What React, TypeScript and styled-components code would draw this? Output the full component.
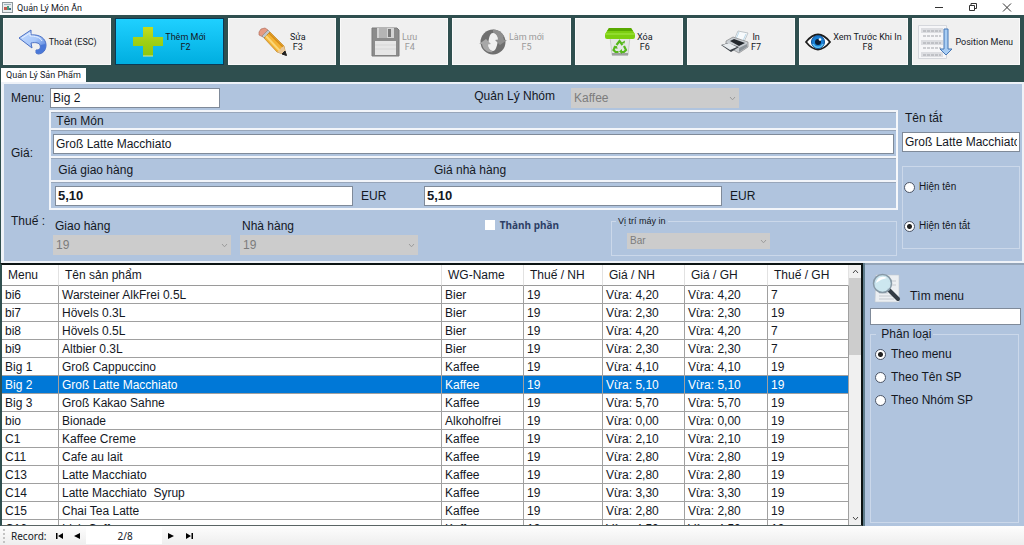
import React, { useState } from "react";
import styled, { createGlobalStyle, css } from "styled-components";

const GlobalStyle = createGlobalStyle`
  * { box-sizing: border-box; }
  body { margin: 0; background: #2f4f4f; color: #14181f; font: 12px/14px "Liberation Sans", Arial, sans-serif; }
  input, select, button { font: inherit; color: inherit; }
`;

const Window = styled.div`
  display: flex;
  flex-direction: column;
  height: 100vh;
  overflow: hidden;
`;

/* ---------- title bar ---------- */
const TitleBar = styled.header`
  display: flex;
  align-items: center;
  flex: none;
  height: 15px;
  padding: 0 12px 0 2px;
  background: #fff;
`;
const Title = styled.h1`
  flex: 1;
  margin: 0 0 0 4px;
  font: 9px/14px Roboto, sans-serif;
`;
const WindowButtons = styled.div`
  display: flex;
  gap: 24px;
`;
const WindowButton = styled.button`
  display: flex;
  padding: 0;
  border: 0;
  background: none;
`;

/* ---------- toolbar ---------- */
const Toolbar = styled.nav`
  display: flex;
  flex: none;
  gap: 4px;
  height: 53px;
  padding: 3px 4px 3px 3px;
  background: #2f4f4f;
`;
const ToolButton = styled.button<{ $active?: boolean; $wide?: boolean }>`
  display: flex;
  align-items: center;
  justify-content: center;
  gap: 2px;
  flex: ${(p) => (p.$wide ? 118 : 108)} 1 0;
  min-width: 0;
  padding: 0;
  border: 1px solid #fafafa;
  background: #f0f0f0;
  font: 9px/10px Roboto, sans-serif;
  white-space: pre;
  &:disabled { color: #9a9a9a; }
  ${(p) =>
    p.$active &&
    css`
      border-color: #0b3a55;
      background: linear-gradient(#1fd0ff, #00aee0);
    `}
`;

/* ---------- tabs and form ---------- */
const TabStrip = styled.div`
  display: flex;
  flex: none;
  height: 14px;
  padding-left: 1px;
  background: #2f4f4f;
`;
const Tab = styled.button`
  padding: 0 5px;
  border: 0;
  background: #fff;
  font: 9px/14px Roboto, sans-serif;
`;
const FormPanel = styled.section`
  display: flex;
  flex: none;
  gap: 4px;
  height: 181px;
  margin-left: 1px;
  border: 2px solid #eef2f8;
  border-left-width: 3px;
  background: #b0c4de;
`;
const FormMain = styled.div`
  flex: 1;
  min-width: 0;
`;
const FormRow = styled.div<{ $height: number }>`
  display: flex;
  height: ${(p) => p.$height}px;
`;
const RowLabel = styled.label<{ $top: number }>`
  flex: none;
  width: 45px;
  padding: ${(p) => p.$top}px 0 0 7px;
`;
const TextBox = styled.input<{ $bold?: boolean }>`
  width: 100%;
  height: 20px;
  padding: 0 2px;
  border: 1px solid #7f8a99;
  border-radius: 0;
  background: #fff;
  color: #14181f;
  outline: none;
  ${(p) => p.$bold && "font-weight: bold; font-size: 13px;"}
`;
const MenuRow = styled.div`
  display: grid;
  grid-template-columns: 170px 1fr 168px;
  flex: 1;
  align-items: start;
  padding: 4px 159px 0 1px;
`;
const GroupLabel = styled.label`
  padding: 1px 16px 0 0;
  text-align: right;
`;
const SelectBox = styled.span<{ $small?: boolean }>`
  position: relative;
  display: block;
  select {
    display: block;
    width: 100%;
    height: ${(p) => (p.$small ? 16 : 20)}px;
    padding: 0 3px;
    border: 0;
    border-radius: 0;
    appearance: none;
    background: #cccccc;
    color: #7c7c7c;
    opacity: 1;
    ${(p) => p.$small && "font-size: 10px;"}
  }
  svg {
    position: absolute;
    right: 3px;
    top: 50%;
    margin-top: -2px;
  }
`;
const PriceGroup = styled.div`
  display: grid;
  grid-template-rows: 18px 28px 24px 1fr;
  flex: 1;
  border: 2px solid #f2f5fa;
  border-right-color: #f6f8fb;
`;
const PriceLine = styled.div<{ $last?: boolean }>`
  display: flex;
  align-items: center;
  padding: 0 2px;
  border-top: 1px solid #98a6ba;
  border-bottom: ${(p) => (p.$last ? 0 : 2)}px solid #f2f5fa;
`;
const PriceHalf = styled.div`
  display: flex;
  align-items: center;
  gap: 8px;
  width: 369px;
  padding: 0 2px;
  input { width: 298px; }
`;
const TaxField = styled.label`
  display: flex;
  flex-direction: column;
  gap: 2px;
  width: 178px;
  margin: 9px 5px 0 4px;
  > span:first-child { padding-left: 2px; }
`;
const CheckLabel = styled.label`
  display: flex;
  align-items: center;
  align-self: flex-start;
  gap: 5px;
  margin: 8px 0 0 auto;
  color: #2d3f66;
  font: bold 10px/14px "Noto Sans", sans-serif;
  input {
    appearance: none;
    width: 10px;
    height: 10px;
    margin: 0;
    background: #fff;
    &:checked { background: #2d3f66; }
  }
`;
const FieldSet = styled.fieldset`
  min-width: 0;
  margin: 0;
  padding: 0;
  border: 1px solid #cbd8ea;
  legend { padding: 0 2px; }
`;
const PrinterSet = styled(FieldSet)`
  width: 286px;
  height: 42px;
  margin: 4px 1px 0 52px;
  padding: 5px 126px 0 15px;
  legend { margin-left: -11px; font-size: 9px; line-height: 14px; }
`;
const FormSide = styled.div`
  display: flex;
  flex-direction: column;
  width: 118px;
  margin-right: 2px;
  padding-top: 27px;
`;
const ShortName = styled.label`
  display: grid;
  gap: 7px;
  > span { padding-left: 3px; }
`;
const RadioBox = styled(FieldSet)`
  display: flex;
  flex-direction: column;
  gap: 25px;
  height: 83px;
  margin-top: 14px;
  padding: 13px 1px;
  font-size: 10px;
`;
const RadioLabel = styled.label<{ $gap: number }>`
  display: flex;
  align-items: center;
  gap: ${(p) => p.$gap}px;
  input {
    appearance: none;
    flex: none;
    width: 11px;
    height: 11px;
    margin: 0;
    border: 1px solid #4c5566;
    border-radius: 50%;
    background: #fff;
    &:checked { background: radial-gradient(circle, #222 0 2px, #fff 3px); }
  }
`;

/* ---------- product list ---------- */
const Lower = styled.main`
  display: flex;
  flex: 1;
  min-height: 0;
  gap: 2px;
  background: #5f7d8c;
`;
const ListFrame = styled.section`
  display: flex;
  flex: 1;
  min-width: 0;
  overflow: hidden;
  border: 2px solid #0c1414;
  border-left-color: #2f4f4f;
  border-bottom: 1px solid #5a6464;
  background: #fff;
`;
const TableClip = styled.div`
  flex: 1;
  min-width: 0;
  overflow: hidden;
`;
const Table = styled.table`
  width: 100%;
  table-layout: fixed;
  border-collapse: separate;
  border-spacing: 0;
`;
const HeadCell = styled.th<{ $width?: number }>`
  width: ${(p) => (p.$width ? p.$width + "px" : "auto")};
  height: 21px;
  padding: 0 6px;
  border-right: 1px solid #e2e2e2;
  border-bottom: 1px solid #9a9a9a;
  font-weight: normal;
  text-align: left;
  white-space: nowrap;
`;
const Row = styled.tr<{ $selected: boolean }>`
  ${(p) => p.$selected && "background: #0078d7; color: #fff;"}
`;
const Cell = styled.td`
  height: 18px;
  padding: 1px 3px 0;
  border-right: 1px solid #a0a0a0;
  border-bottom: 1px solid #a0a0a0;
  overflow: hidden;
  white-space: pre;
  line-height: 14px;
`;
const ScrollBar = styled.div`
  display: flex;
  flex-direction: column;
  flex: none;
  width: 12px;
  background: #f0f0f0;
`;
const ScrollButton = styled.button`
  display: grid;
  place-items: center;
  height: 13px;
  padding: 0;
  border: 0;
  background: none;
`;
const ScrollTrack = styled.div`
  flex: 1;
`;
const ScrollThumb = styled.div`
  height: 33%;
  background: #cdcdcd;
`;

/* ---------- search panel ---------- */
const SearchPanel = styled.aside`
  display: flex;
  flex-direction: column;
  flex: none;
  width: 159px;
  padding: 6px 3px 3px 5px;
  border-top: 2px solid #93a4b8;
  background: #b0c4de;
`;
const SearchLabel = styled.label`
  display: flex;
  align-items: flex-end;
  gap: 9px;
  height: 33px;
  padding: 0 0 1px 2px;
`;
const SearchBox = styled(TextBox)`
  height: 17px;
  margin-top: 4px;
`;
const SortBox = styled(FieldSet)`
  display: flex;
  flex-direction: column;
  flex: 1;
  gap: 9px;
  margin: 2px 2px 0 0;
  padding: 6px 4px;
  legend { margin-left: 1px; }
`;

/* ---------- record bar ---------- */
const RecordBar = styled.footer`
  display: flex;
  align-items: center;
  flex: none;
  height: 19px;
  padding-left: 3px;
  background: linear-gradient(#fdfdfd, #eeeeee);
  font: 10px/14px "Noto Sans", sans-serif;
`;
const RecordLabel = styled.label`
  margin-right: 4px;
`;
const Grip = styled.span`
  height: 14px;
  margin-right: 6px;
  border-left: 2px dotted #c4c4c4;
`;
const NavButton = styled.button`
  display: grid;
  place-items: center;
  width: 18px;
  height: 16px;
  padding: 0;
  border: 0;
  background: none;
`;
const RecordInput = styled.input`
  width: 76px;
  height: 17px;
  padding: 0 0 0 20px;
  border: 0;
  background: #fff;
  text-align: left;
  text-indent: 11px;
`;

/* ---------- drawings ---------- */
const Chevron = ({ up, color = "#9c9c9c" }: { up?: boolean; color?: string }) => (
  <svg width="7" height="5" viewBox="0 0 7 5" fill="none" stroke={color}>
    <path d={up ? "M1 4 3.5 1.2 6 4" : "M1 1 3.5 3.8 6 1"} />
  </svg>
);

const AppIcon = () => (
  <svg width="11" height="11" viewBox="0 0 11 11">
    <rect x=".5" y=".5" width="10" height="10" fill="#e9eef0" stroke="#8d979b" />
    <path d="M2 2.5h7" stroke="#9fb4bd" />
    <path d="M2 5h3v3H2z" fill="#c65a4f" />
    <path d="M5 4h2v4H5z" fill="#4d9a79" />
    <path d="M7 6h2v2H7z" fill="#3c6b8c" />
  </svg>
);

const BackIcon = () => (
  <svg width="29" height="28" viewBox="0 0 29 28">
    <defs>
      <linearGradient id="back" x1="0" y1="0" x2="1" y2="1">
        <stop offset="0" stopColor="#c6dcff" />
        <stop offset=".5" stopColor="#a9c8fa" />
        <stop offset="1" stopColor="#3565cf" />
      </linearGradient>
    </defs>
    <path d="M1 10 13 2v5c9-1 15 4 15 10 0 5-3 9-8 9l-2-1v-3c4 0 5-2 4-5-1-2-4-3-9-2l1 5z" fill="url(#back)" stroke="#4a6fc4" strokeLinejoin="round" />
    <path d="M18 22c4 0 5-2 4.500-5l5-1c1 6-3 10-9.500 9z" fill="#4a78d8" />
    <path d="M4 10l8-5v3c5 0 10 1 12 5" fill="none" stroke="#e6f0ff" />
  </svg>
);

const PlusIcon = () => (
  <svg width="30" height="31" viewBox="0 0 30 31">
    <defs>
      <linearGradient id="plus" x1="0" y1="0" x2="0" y2="1">
        <stop offset="0" stopColor="#c6dc1c" />
        <stop offset=".5" stopColor="#9fd014" />
        <stop offset="1" stopColor="#8cc60e" />
      </linearGradient>
    </defs>
    <path d="M10 1h10v10h10v9H20v10H10V20H0v-9h10z" fill="url(#plus)" />
    <path d="M10 30h10" stroke="#d9ea9a" />
  </svg>
);

const PencilIcon = () => (
  <svg width="30" height="30" viewBox="0 0 30 30">
    <path d="M1 5 3 2l4-1 3 2-5 7-4-2z" fill="#e59a82" stroke="#a96352" strokeWidth=".6" />
    <path d="m4 9 6-6 2 2-6 6z" fill="#bfc5ca" stroke="#777" strokeWidth=".5" />
    <path d="m6 11 6-6 14 14 2 9-9-3z" fill="#f3b233" stroke="#b07416" strokeWidth=".6" />
    <path d="m8 9 14 15" stroke="#fbd777" strokeWidth="2" />
    <path d="m11 6 14 14" stroke="#d48b18" strokeWidth="1.500" />
    <path d="m19 25 3-2 1-2 3-2 2 9z" fill="#e8c79a" />
    <path d="m24 27 3-3 1.500 4.500z" fill="#222" stroke="#222" />
  </svg>
);

const SaveIcon = () => (
  <svg width="29" height="30" viewBox="0 0 29 30">
    <path d="M1 1h25l2 2v26H1z" fill="#8c8c8c" stroke="#7a7a7a" />
    <path d="M6 1h17v10H6z" fill="#d4d4d4" />
    <path d="M8 1h8v10H8z" fill="#b5b5b5" />
    <path d="M17 2h3v8h-3z" fill="#777" />
    <path d="M4 14h21v14H4z" fill="#e6e6e6" />
    <path d="M4 18h21M4 22h21" stroke="#d6d6d6" />
  </svg>
);

const RefreshIcon = () => (
  <svg width="28" height="28" viewBox="0 0 28 28">
    <circle cx="14" cy="14" r="12.500" fill="#6f6f6f" />
    <path d="M14 1.500a12.500 12.500 0 0 1 11 7l-8 6-3-9z" fill="#8f8f8f" />
    <path d="M14 5c4 0 6 4 5 8s-2 10-5 10-6-3-5-7 1-11 5-11z" fill="#f0f0f0" />
    <path d="m0 16 7-5 5 5-3 .5c0 3 2 6 5 7.500-5 1-10-2-11-8z" fill="#a8a8a8" />
    <path d="m28 12-7 5-5-5 3-.5c0-3-2-6-5-7.500 5-1 10 2 11 8z" fill="#8f8f8f" />
  </svg>
);

const TrashIcon = () => (
  <svg width="30" height="30" viewBox="0 0 30 30">
    <path d="M5 10h20l-2 18H7z" fill="#e5e8e6" stroke="#b5bab6" strokeWidth=".6" />
    <path d="M7 26h16v2.500H7z" fill="#9da29e" />
    <path d="M4 1h22l4 6v3q0 2-2 2H2q-2 0-2-2V7z" fill="#7ccf10" />
    <path d="M4 1h22l2 3H2z" fill="#58a800" />
    <path d="M0 7h30" stroke="#a6e84a" />
    <g fill="none" stroke="#56b81c" strokeWidth="2.200">
      <path d="m11.500 18 3-4 3 4" />
      <path d="m19 19 2 4-2 2h-3" />
      <path d="m10.500 19-2 4 2 2h3" />
    </g>
    <path d="m16 16 3.500.5.500-3zM17 22v5l-3-2.500zM8 20l4-1 .5 3z" fill="#56b81c" />
  </svg>
);

const PrinterIcon = () => (
  <svg width="28" height="24" viewBox="0 0 28 24">
    <path d="m13 10 4-9 10 2-5 11z" fill="#f7fafc" stroke="#a9b1b8" strokeWidth=".7" />
    <path d="m15 9 3-7M25 4l-4 9" stroke="#bcd9ea" />
    <path d="m5 11 7-4 15 5v5l-9 6L5 16z" fill="#c9ced3" stroke="#777" strokeWidth=".6" />
    <path d="m9 11 4-2 11 4-6 3z" fill="#23282d" />
    <path d="m18 18 8-4v3l-8 5z" fill="#8d949a" />
    <path d="m0 15 7-2 11 4-8 5z" fill="#3b4147" />
    <path d="m1 15 7-2 8 4-7 3z" fill="#e8ecef" />
  </svg>
);

const EyeIcon = () => (
  <svg width="26" height="18" viewBox="0 0 26 18">
    <path d="M1 9Q13-6 25 9 13 24 1 9z" fill="#fff" stroke="#1c1c1c" strokeWidth="1.800" />
    <circle cx="13" cy="9" r="6.500" fill="#1a7fd4" stroke="#0d4f96" />
    <path d="M8 11a5.500 5.500 0 0 0 10 0" fill="none" stroke="#5cc3f5" strokeWidth="1.500" />
    <circle cx="13" cy="9" r="3" fill="#0a1c33" />
    <circle cx="15" cy="6.500" r="1.300" fill="#fff" />
  </svg>
);

const PositionIcon = () => (
  <svg width="35" height="34" viewBox="0 0 35 34">
    <path d="M.5.500h28v33H.5z" fill="#f6f6f8" stroke="#d5d7dc" />
    <path d="M3 3h22v5H3zM3 15h22v5H3zM3 27h22v5H3z" fill="#dcdde1" />
    <path d="M5 6h18M5 18h18M5 30h18M5 11h18M5 23h18" stroke="#a2a4aa" strokeDasharray="3 1" />
    <path d="M26 4h4v20h4l-6 6-6-6h4z" fill="#a9cdf3" stroke="#4577b5" strokeLinejoin="round" />
  </svg>
);

const SearchIcon = () => (
  <svg width="29" height="30" viewBox="0 0 29 30">
    <path d="M4 2h23v27H3z" fill="#eceff2" stroke="#c3c9d0" strokeWidth=".6" />
    <path d="M16 8h8M17 12h7M7 20h9M7 23h14M7 26h15" stroke="#c4c9cf" />
    <path d="m17 17 9 9" stroke="#333b44" strokeWidth="4" strokeLinecap="round" />
    <circle cx="10.500" cy="10.500" r="9" fill="#c9e6ee" fillOpacity=".9" stroke="#8799a6" strokeWidth="1.500" />
    <path d="M4 10a7 7 0 0 1 11-5Q9 6 4 10z" fill="#fff" />
  </svg>
);

const tools = [
  { text: "Thoát (ESC)", icon: <BackIcon /> },
  { text: "Thêm Mới\nF2", icon: <PlusIcon />, active: true },
  { text: "Sửa\nF3", icon: <PencilIcon /> },
  { text: "Lưu\nF4", icon: <SaveIcon />, disabled: true },
  { text: "Làm mới\nF5", icon: <RefreshIcon />, disabled: true, wide: true },
  { text: "Xóa\nF6", icon: <TrashIcon /> },
  { text: "In\nF7", icon: <PrinterIcon /> },
  { text: "Xem Trước Khi In\nF8", icon: <EyeIcon /> },
  { text: "Position Menu", icon: <PositionIcon /> },
];

const columns: [string, number?][] = [
  ["Menu", 57],
  ["Tên sản phẩm"],
  ["WG-Name", 82],
  ["Thuế / NH", 79],
  ["Giá / NH", 82],
  ["Giá / GH", 83],
  ["Thuế / GH", 81],
];

const products = [
  ["bi6", "Warsteiner AlkFrei 0.5L", "Bier", "4,20", "7"],
  ["bi7", "Hövels 0.3L", "Bier", "2,30", "19"],
  ["bi8", "Hövels 0.5L", "Bier", "4,20", "7"],
  ["bi9", "Altbier 0.3L", "Bier", "2,30", "7"],
  ["Big 1", "Groß Cappuccino", "Kaffee", "4,10", "19"],
  ["Big 2", "Groß Latte Macchiato", "Kaffee", "5,10", "19"],
  ["Big 3", "Groß Kakao Sahne", "Kaffee", "5,70", "19"],
  ["bio", "Bionade", "Alkoholfrei", "0,00", "19"],
  ["C1", "Kaffee Creme", "Kaffee", "2,10", "19"],
  ["C11", "Cafe au lait", "Kaffee", "2,80", "19"],
  ["C13", "Latte Macchiato", "Kaffee", "2,80", "19"],
  ["C14", "Latte Macchiato  Syrup", "Kaffee", "3,30", "19"],
  ["C15", "Chai Tea Latte", "Kaffee", "2,80", "19"],
  ["C16", "Irish Coffee", "Kaffee", "4,50", "19"],
];

const Select = ({ id, value, small }: { id: string; value: string; small?: boolean }) => (
  <SelectBox $small={small}>
    <select id={id} disabled defaultValue={value}>
      <option>{value}</option>
    </select>
    <Chevron />
  </SelectBox>
);

export default function App() {
  const [selected, setSelected] = useState("Big 2");
  return (
    <Window>
      <GlobalStyle />
      <TitleBar>
        <AppIcon />
        <Title>Quản Lý Món Ăn</Title>
        <WindowButtons>
          <WindowButton aria-label="Minimize">
            <svg width="10" height="9" viewBox="0 0 10 9"><path d="M1 4.500h8" stroke="#333" /></svg>
          </WindowButton>
          <WindowButton aria-label="Restore">
            <svg width="10" height="9" viewBox="0 0 10 9" fill="none" stroke="#333"><path d="M1.500 2.500h5v5h-5zM3 2V.5h5.500v5H7" /></svg>
          </WindowButton>
          <WindowButton aria-label="Close">
            <svg width="10" height="9" viewBox="0 0 10 9"><path d="m1 .5 8 8m0-8-8 8" stroke="#333" /></svg>
          </WindowButton>
        </WindowButtons>
      </TitleBar>

      <Toolbar>
        {tools.map((t) => (
          <ToolButton key={t.text} $active={t.active} $wide={t.wide} disabled={t.disabled}>
            {t.icon}
            <span>{t.text}</span>
          </ToolButton>
        ))}
      </Toolbar>

      <TabStrip>
        <Tab>Quản Lý Sản Phẩm</Tab>
      </TabStrip>

      <FormPanel>
        <FormMain>
          <FormRow $height={26}>
            <RowLabel $top={7} htmlFor="menu">Menu:</RowLabel>
            <MenuRow>
              <TextBox id="menu" defaultValue="Big 2" />
              <GroupLabel htmlFor="group">Quản Lý Nhóm</GroupLabel>
              <Select id="group" value="Kaffee" />
            </MenuRow>
          </FormRow>
          <FormRow $height={100}>
            <RowLabel $top={36} as="span">Giá:</RowLabel>
            <PriceGroup>
              <PriceLine><label htmlFor="name">&nbsp;Tên Món</label></PriceLine>
              <PriceLine><TextBox id="name" defaultValue="Groß Latte Macchiato" /></PriceLine>
              <PriceLine>
                <PriceHalf><label htmlFor="delivery">&nbsp;Giá giao hàng</label></PriceHalf>
                <PriceHalf><label htmlFor="inhouse">&nbsp;&nbsp;&nbsp;Giá nhà hàng</label></PriceHalf>
              </PriceLine>
              <PriceLine $last>
                <PriceHalf><TextBox id="delivery" $bold defaultValue="5,10" />EUR</PriceHalf>
                <PriceHalf><TextBox id="inhouse" $bold defaultValue="5,10" />EUR</PriceHalf>
              </PriceLine>
            </PriceGroup>
          </FormRow>
          <FormRow $height={51}>
            <RowLabel $top={4} as="span">Thuế :</RowLabel>
            <TaxField htmlFor="tax1"><span>Giao hàng</span><Select id="tax1" value="19" /></TaxField>
            <TaxField htmlFor="tax2"><span>Nhà hàng</span><Select id="tax2" value="19" /></TaxField>
            <CheckLabel><input type="checkbox" />Thành phần</CheckLabel>
            <PrinterSet>
              <legend><label htmlFor="printer">Vị trí máy in</label></legend>
              <Select id="printer" value="Bar" small />
            </PrinterSet>
          </FormRow>
        </FormMain>
        <FormSide>
          <ShortName><span>Tên tắt</span><TextBox defaultValue="Groß Latte Macchiato" /></ShortName>
          <RadioBox>
            <RadioLabel $gap={4}><input type="radio" name="display" />Hiện tên</RadioLabel>
            <RadioLabel $gap={4}><input type="radio" name="display" defaultChecked />Hiện tên tắt</RadioLabel>
          </RadioBox>
        </FormSide>
      </FormPanel>

      <Lower>
        <ListFrame>
          <TableClip>
            <Table>
              <thead>
                <tr>{columns.map(([c, w]) => <HeadCell key={c} $width={w}>{c}</HeadCell>)}</tr>
              </thead>
              <tbody>
                {products.map(([code, name, group, price, tax]) => (
                  <Row key={code} $selected={code === selected} onClick={() => setSelected(code)}>
                    <Cell>{code}</Cell>
                    <Cell>{name}</Cell>
                    <Cell>{group}</Cell>
                    <Cell>19</Cell>
                    <Cell>Vừa: {price}</Cell>
                    <Cell>Vừa: {price}</Cell>
                    <Cell>{tax}</Cell>
                  </Row>
                ))}
              </tbody>
            </Table>
          </TableClip>
          <ScrollBar>
            <ScrollButton aria-label="Up"><Chevron up color="#444" /></ScrollButton>
            <ScrollTrack><ScrollThumb /></ScrollTrack>
            <ScrollButton aria-label="Down"><Chevron color="#444" /></ScrollButton>
          </ScrollBar>
        </ListFrame>
        <SearchPanel>
          <SearchLabel htmlFor="search"><SearchIcon />Tìm menu</SearchLabel>
          <SearchBox id="search" />
          <SortBox>
            <legend>&nbsp;Phân loại</legend>
            <RadioLabel $gap={5}><input type="radio" name="sort" defaultChecked />Theo menu</RadioLabel>
            <RadioLabel $gap={5}><input type="radio" name="sort" />Theo Tên SP</RadioLabel>
            <RadioLabel $gap={5}><input type="radio" name="sort" />Theo Nhóm SP</RadioLabel>
          </SortBox>
        </SearchPanel>
      </Lower>

      <RecordBar>
        <Grip />
        <RecordLabel htmlFor="record">Record:</RecordLabel>
        <NavButton aria-label="First">
          <svg width="7" height="6" viewBox="0 0 7 6"><path d="M0 0h1.500v6H0zM7 0v6L2 3z" /></svg>
        </NavButton>
        <NavButton aria-label="Previous">
          <svg width="6" height="6" viewBox="0 0 6 6"><path d="M6 0v6L0 3z" /></svg>
        </NavButton>
        <RecordInput id="record" defaultValue="2/8" />
        <NavButton aria-label="Next">
          <svg width="6" height="6" viewBox="0 0 6 6"><path d="M0 0v6l6-3z" /></svg>
        </NavButton>
        <NavButton aria-label="Last">
          <svg width="7" height="6" viewBox="0 0 7 6"><path d="M5.500 0H7v6H5.500zM0 0v6l5-3z" /></svg>
        </NavButton>
      </RecordBar>
    </Window>
  );
}
